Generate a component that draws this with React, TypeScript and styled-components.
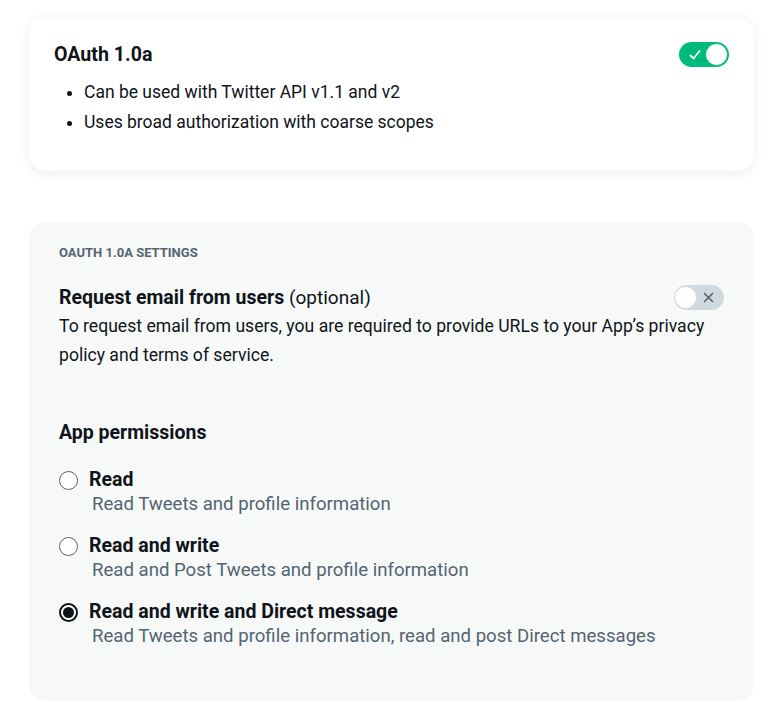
import React from "react";
import styled, { createGlobalStyle } from "styled-components";

const GlobalStyle = createGlobalStyle`
  body {
    margin: 0;
    background: #ffffff;
    font-family: Roboto, "Liberation Sans", Arial, sans-serif;
    color: #0f1419;
  }
`;

const Page = styled.div`
  padding: 17px 16px 18px 29px;
  display: flex;
  flex-direction: column;
  gap: 51px;
`;

const Card = styled.section`
  background: #ffffff;
  border-radius: 16px;
  box-shadow: 0 2px 12px rgba(0, 0, 0, 0.08);
  padding: 25px 25px 0 25px;
  height: 154px;
  box-sizing: border-box;
`;

const CardHeader = styled.div`
  display: flex;
  align-items: center;
  justify-content: space-between;
`;

const CardTitle = styled.h2`
  margin: 0;
  font-size: 19.6px;
  font-weight: 700;
  line-height: 24px;
`;

const Bullets = styled.ul`
  margin: 10px 0 0 0;
  padding-left: 30px;
  font-size: 17.5px;
  line-height: 30px;
`;

const Switch = styled.span<{ $on: boolean }>`
  position: relative;
  display: inline-flex;
  align-items: center;
  width: 50px;
  height: 25px;
  border-radius: 13px;
  box-sizing: border-box;
  background: ${(p) => (p.$on ? "#00ba7c" : "#cfd9de")};
  flex-shrink: 0;
`;

const Knob = styled.span<{ $on: boolean }>`
  position: absolute;
  top: 1px;
  ${(p) => (p.$on ? "right: 1px;" : "left: 0;")}
  width: 23px;
  height: 23px;
  border-radius: 50%;
  background: #ffffff;
  box-sizing: border-box;
  border: 1px solid ${(p) => (p.$on ? "#00ba7c" : "#cfd9de")};
`;

const SwitchIcon = styled.svg<{ $on: boolean }>`
  position: absolute;
  top: 6px;
  ${(p) => (p.$on ? "left: 9px;" : "right: 9px;")}
`;

const Toggle: React.FC<{ on: boolean }> = ({ on }) => (
  <Switch $on={on}>
    {on ? (
      <SwitchIcon $on width="14" height="13" viewBox="0 0 14 13">
        <path d="M2 7 L5.5 10.5 L12 2.5" fill="none" stroke="#ffffff" strokeWidth="1.8" />
      </SwitchIcon>
    ) : (
      <SwitchIcon $on={false} width="13" height="13" viewBox="0 0 13 13">
        <path d="M2 2 L11 11 M11 2 L2 11" fill="none" stroke="#536471" strokeWidth="1.6" />
      </SwitchIcon>
    )}
    <Knob $on={on} />
  </Switch>
);

const Settings = styled.section`
  background: #f7f9f9;
  border-radius: 16px;
  padding: 24px 30px 53px 30px;
`;

const Eyebrow = styled.div`
  font-size: 13px;
  font-weight: 700;
  color: #536471;
  line-height: 14px;
  text-transform: uppercase;
`;

const EmailRow = styled.div`
  margin-top: 25px;
  display: flex;
  justify-content: space-between;
  align-items: center;
`;

const RowTitle = styled.div`
  font-size: 19.5px;
  line-height: 22px;
  font-weight: 700;
  span {
    font-weight: 400;
    font-size: 19px;
  }
`;

const Paragraph = styled.p`
  margin: 2px 0 0 0;
  font-size: 17.6px;
  line-height: 29px;
  padding-right: 10px;
`;

const SectionTitle = styled.h3`
  margin: 52px 0 0 0;
  font-size: 19.5px;
  font-weight: 700;
  line-height: 22px;
`;

const Options = styled.div`
  margin-top: 24px;
  display: flex;
  flex-direction: column;
  gap: 18px;
`;

const Option = styled.label`
  display: grid;
  grid-template-columns: 30px 1fr;
  align-items: center;
`;

const Radio = styled.span<{ $checked: boolean }>`
  width: 19px;
  height: 19px;
  border-radius: 50%;
  box-sizing: border-box;
  border: ${(p) => (p.$checked ? "2px solid #0f1419" : "1.5px solid #536471")};
  background: #ffffff;
  display: flex;
  align-items: center;
  justify-content: center;
  &::after {
    content: "";
    display: ${(p) => (p.$checked ? "block" : "none")};
    width: 11px;
    height: 11px;
    border-radius: 50%;
    background: #0f1419;
  }
`;

const OptionTitle = styled.span`
  font-size: 19.5px;
  font-weight: 700;
  line-height: 24px;
`;

const OptionDesc = styled.span`
  grid-column: 2;
  font-size: 18.6px;
  line-height: 24px;
  color: #536471;
  padding-left: 3px;
`;

const permissions = [
  { title: "Read", desc: "Read Tweets and profile information", checked: false },
  { title: "Read and write", desc: "Read and Post Tweets and profile information", checked: false },
  {
    title: "Read and write and Direct message",
    desc: "Read Tweets and profile information, read and post Direct messages",
    checked: true,
  },
];

export default function App() {
  return (
    <>
      <GlobalStyle />
      <Page>
        <Card>
          <CardHeader>
            <CardTitle>OAuth 1.0a</CardTitle>
            <Toggle on />
          </CardHeader>
          <Bullets>
            <li>Can be used with Twitter API v1.1 and v2</li>
            <li>Uses broad authorization with coarse scopes</li>
          </Bullets>
        </Card>

        <Settings>
          <Eyebrow>OAuth 1.0a settings</Eyebrow>
          <EmailRow>
            <RowTitle>
              Request email from users <span>(optional)</span>
            </RowTitle>
            <Toggle on={false} />
          </EmailRow>
          <Paragraph>
            To request email from users, you are required to provide URLs to your App’s privacy policy and terms of
            service.
          </Paragraph>

          <SectionTitle>App permissions</SectionTitle>
          <Options>
            {permissions.map((p) => (
              <Option key={p.title}>
                <Radio $checked={p.checked} />
                <OptionTitle>{p.title}</OptionTitle>
                <OptionDesc>{p.desc}</OptionDesc>
              </Option>
            ))}
          </Options>
        </Settings>
      </Page>
    </>
  );
}
